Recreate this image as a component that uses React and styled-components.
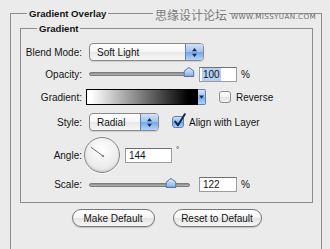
import React from 'react';
import styled, { createGlobalStyle } from 'styled-components';

const GlobalStyle = createGlobalStyle`
  html, body { margin: 0; padding: 0; background: #ebebeb; }
  body {
    font-family: "Liberation Sans", Arial, sans-serif;
    font-size: 10px;
    color: #141414;
  }
`;

const Page = styled.div`
  position: relative;
  width: 330px;
  height: 249px;
  overflow: hidden;
  box-sizing: border-box;
  padding: 7px 8px 0 10px;
`;

const Group = styled.fieldset`
  margin: 0;
  min-width: 0;
  border: 1px solid #8c8c8c;
  padding: ${p => (p.$outer ? '2px 8px 60px 9px' : '8px 0 10px 0')};
`;

const Legend = styled.legend`
  font-weight: bold;
  font-size: 9.6px;
  line-height: 13px;
  padding: 0 2px;
  margin-left: ${p => p.$indent}px;
`;

const Watermark = styled.div`
  position: absolute;
  top: 8px;
  left: 153px;
  display: flex;
  align-items: flex-start;
  white-space: nowrap;
`;

const WmCn = styled.span`
  flex-shrink: 0;
  font-family: "Noto Sans CJK SC", sans-serif;
  font-size: 12px;
  line-height: 14px;
  color: #7c7c7c;
  background: #ebebeb;
  padding: 0 2px;
`;

const WmUrl = styled.span`
  flex-shrink: 0;
  margin-left: 2px;
  font-family: "DejaVu Sans", sans-serif;
  font-size: 7.2px;
  letter-spacing: 0.35px;
  line-height: 8px;
  margin-top: 5px;
  color: #6f6f6f;
`;

const Form = styled.div`
  display: flex;
  flex-direction: column;
  gap: 5px;
`;

const Row = styled.div`
  display: grid;
  grid-template-columns: 61px auto;
  column-gap: 7px;
  align-items: center;
  height: ${p => p.$h}px;
`;

const Label = styled.span`
  text-align: right;
  white-space: nowrap;
`;

const Controls = styled.div`
  display: flex;
  align-items: center;
  height: 100%;
`;

const Select = styled.div`
  display: flex;
  width: ${p => p.$w}px;
  height: 18px;
  box-sizing: border-box;
  border: 1px solid #8a8a8a;
  border-radius: 4px;
  overflow: hidden;
  background: linear-gradient(#ffffff, #f5f5f5 50%, #e8e8e8 51%, #f6f6f6);
  box-shadow: 0 1px 1px rgba(0, 0, 0, 0.12);
`;

const SelectText = styled.span`
  flex: 1;
  display: flex;
  align-items: center;
  padding-left: 7px;
`;

const SelectArrows = styled.span`
  width: 17px;
  border-left: 1px solid #5f82b8;
  background: linear-gradient(#d2e3f8, #9fc1ee 50%, #75a6e6 51%, #b3d4f8);
  display: flex;
  align-items: center;
  justify-content: center;
`;

const Slider = styled.div`
  position: relative;
  width: 101px;
  height: 4px;
  box-sizing: border-box;
  border: 1px solid #7d7d7d;
  border-radius: 2px;
  background: linear-gradient(#8e8e8e, #b4b4b4);
`;

const Thumb = styled.svg`
  position: absolute;
  bottom: -2px;
  transform: translateX(-50%);
`;

const Field = styled.div`
  width: ${p => p.$w}px;
  height: 15px;
  box-sizing: border-box;
  margin-left: ${p => p.$ml || 0}px;
  border: 1px solid #9c9c9c;
  border-top-color: #6f6f6f;
  background: #fff;
  padding-left: 3px;
  display: flex;
  align-items: center;
  font-size: 10px;
`;

const Selected = styled.span`
  background: #b5d0f2;
  padding: 1px 1px;
  margin-left: -1px;
`;

const Unit = styled.span`
  margin-left: 4px;
  align-self: ${p => (p.$top ? 'flex-start' : 'center')};
  font-size: ${p => (p.$top ? 8 : 10)}px;
  margin-top: ${p => (p.$top ? 8 : 0)}px;
`;

const GradientPicker = styled.div`
  display: flex;
  height: 16px;
  margin-left: -3px;
`;

const Swatch = styled.div`
  width: 112px;
  box-sizing: border-box;
  border: 1px solid #000;
  background: linear-gradient(to right, #ffffff 4%, #8a8a8a 45%, #000000 92%);
`;

const SwatchArrow = styled.div`
  width: 7px;
  border: 1px solid #5f82b8;
  border-left: none;
  border-radius: 0 2px 2px 0;
  background: linear-gradient(#d2e3f8, #9fc1ee 50%, #75a6e6 51%, #b3d4f8);
  display: flex;
  align-items: center;
  justify-content: center;
`;

const Check = styled.label`
  display: flex;
  align-items: center;
  gap: 5px;
  margin-left: 13px;
`;

const Box = styled.span`
  position: relative;
  width: 12px;
  height: 12px;
  box-sizing: border-box;
  border: 1px solid ${p => (p.$on ? '#5b7fb5' : '#8d8d8d')};
  border-radius: 3px;
  background: ${p =>
    p.$on
      ? 'linear-gradient(#cfe1f8, #91b8ec 50%, #6e9fe3 51%, #b2d3f8)'
      : 'linear-gradient(#ffffff, #f2f2f2 50%, #e2e2e2 51%, #f4f4f4)'};
`;

const Tick = styled.svg`
  position: absolute;
  left: 0px;
  top: -4px;
`;

const Dial = styled.div`
  position: relative;
  width: 36px;
  height: 36px;
  box-sizing: border-box;
  margin-left: -5px;
  border: 1px solid #878787;
  border-radius: 50%;
  background: radial-gradient(circle at 50% 35%, #ffffff, #ececec 60%, #d6d6d6);
  box-shadow: inset 0 -1px 2px rgba(0, 0, 0, 0.12), 0 1px 0 rgba(255, 255, 255, 0.9);
`;

const DialHand = styled.svg`
  position: absolute;
  left: 0;
  top: 0;
`;

const Buttons = styled.div`
  display: flex;
  justify-content: center;
  gap: 18px;
  margin-top: 6px;
`;

const Button = styled.button`
  width: ${p => p.$w}px;
  height: 18px;
  box-sizing: border-box;
  padding: 0;
  border: 1px solid #777;
  border-radius: 9px;
  font-family: "Liberation Sans", Arial, sans-serif;
  font-size: 10px;
  color: #141414;
  background: linear-gradient(#ffffff, #f4f4f4 50%, #e4e4e4 51%, #f7f7f7);
  box-shadow: 0 1px 1px rgba(0, 0, 0, 0.18);
`;

function UpDown() {
  return (
    <svg width="7" height="11" viewBox="0 0 7 11">
      <path d="M3.5 1 L6 4.2 L1 4.2 Z M3.5 10 L6 6.8 L1 6.8 Z" fill="#1b2d55" />
    </svg>
  );
}

function SliderControl({ value, max }) {
  const left = (value / max) * 100;
  return (
    <Slider>
      <Thumb width="11" height="10" viewBox="0 0 11 10" style={{ left: `${left}%` }}>
        <defs>
          <linearGradient id={`th${max}`} x1="0" y1="0" x2="0" y2="1">
            <stop offset="0" stopColor="#e4effc" />
            <stop offset="1" stopColor="#86aee3" />
          </linearGradient>
        </defs>
        <path
          d="M5.5 0.6 Q6.2 0.6 10.4 4.2 L10.4 9.4 L0.6 9.4 L0.6 4.2 Q4.8 0.6 5.5 0.6 Z"
          fill={`url(#th${max})`}
          stroke="#486a9c"
          strokeWidth="1"
        />
      </Thumb>
    </Slider>
  );
}

function AngleDial({ angle }) {
  const r = (angle * Math.PI) / 180;
  const x2 = 18 + 15 * Math.cos(r);
  const y2 = 18 - 15 * Math.sin(r);
  return (
    <Dial>
      <DialHand width="34" height="34" viewBox="0 0 34 34">
        <line x1="18" y1="18" x2={x2} y2={y2} stroke="#6a6a6a" strokeWidth="1" />
        <circle cx="18" cy="18" r="1.2" fill="#8a8a8a" />
      </DialHand>
    </Dial>
  );
}

export default function App() {
  return (
    <>
      <GlobalStyle />
      <Page>
        <Group $outer>
          <Legend $indent={7}>Gradient Overlay</Legend>
          <Group>
            <Legend $indent={16}>Gradient</Legend>
            <Form>
              <Row $h={18}>
                <Label>Blend Mode:</Label>
                <Controls>
                  <Select $w={115}>
                    <SelectText>Soft Light</SelectText>
                    <SelectArrows><UpDown /></SelectArrows>
                  </Select>
                </Controls>
              </Row>
              <Row $h={16}>
                <Label>Opacity:</Label>
                <Controls>
                  <SliderControl value={100} max={100} />
                  <Field $w={38} $ml={9}><Selected>100</Selected></Field>
                  <Unit>%</Unit>
                </Controls>
              </Row>
              <Row $h={20}>
                <Label>Gradient:</Label>
                <Controls>
                  <GradientPicker>
                    <Swatch />
                    <SwatchArrow>
                      <svg width="5" height="4" viewBox="0 0 5 4">
                        <path d="M0 0.5 L5 0.5 L2.5 3.8 Z" fill="#1b2d55" />
                      </svg>
                    </SwatchArrow>
                  </GradientPicker>
                  <Check>
                    <Box />
                    Reverse
                  </Check>
                </Controls>
              </Row>
              <Row $h={20}>
                <Label>Style:</Label>
                <Controls>
                  <Select $w={70}>
                    <SelectText>Radial</SelectText>
                    <SelectArrows><UpDown /></SelectArrows>
                  </Select>
                  <Check>
                    <Box $on>
                      <Tick width="14" height="15" viewBox="0 0 14 15">
                        <path
                          d="M2.2 8.5 L5 12.3 L11.8 1.2"
                          fill="none"
                          stroke="#15264a"
                          strokeWidth="2"
                          strokeLinecap="round"
                          strokeLinejoin="round"
                        />
                      </Tick>
                    </Box>
                    Align with Layer
                  </Check>
                </Controls>
              </Row>
              <Row $h={35}>
                <Label>Angle:</Label>
                <Controls>
                  <AngleDial angle={144} />
                  <Field $w={47} $ml={5}>144</Field>
                  <Unit $top>°</Unit>
                </Controls>
              </Row>
              <Row $h={15}>
                <Label>Scale:</Label>
                <Controls>
                  <SliderControl value={122} max={150} />
                  <Field $w={38} $ml={9}>122</Field>
                  <Unit>%</Unit>
                </Controls>
              </Row>
            </Form>
          </Group>
          <Buttons>
            <Button $w={83}>Make Default</Button>
            <Button $w={89}>Reset to Default</Button>
          </Buttons>
        </Group>
        <Watermark>
          <WmCn>思缘设计论坛</WmCn>
          <WmUrl>WWW.MISSYUAN.COM</WmUrl>
        </Watermark>
      </Page>
    </>
  );
}
